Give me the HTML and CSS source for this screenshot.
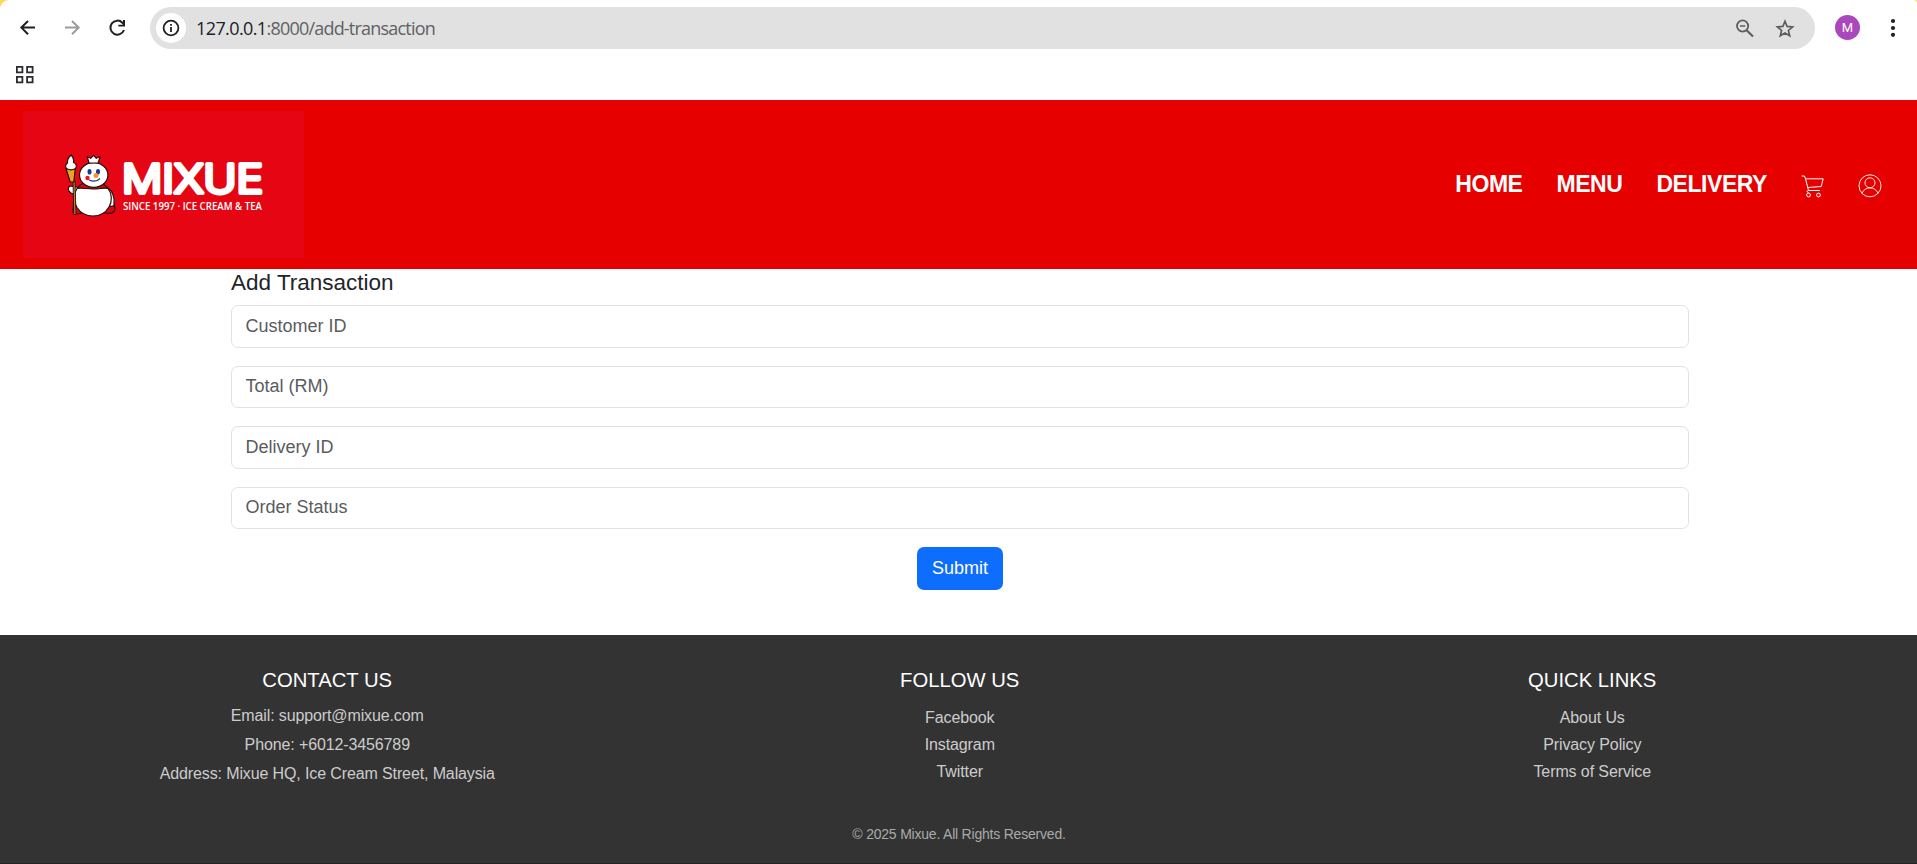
FILE: index.html
```html
<!DOCTYPE html>
<html lang="en">
<head>
<meta charset="utf-8">
<title>Add Transaction</title>
<link rel="stylesheet" href="styles.css">
</head>
<body>
<div class="browser">
  <div class="toolbar">
    <svg class="nav-icons" width="150" height="54" viewBox="0 0 150 54" fill="none" stroke-width="2">
      <path d="M35 27.600H21.500M28 21l-6.600 6.600 6.600 6.600" stroke="#1f2023"/>
      <path d="M65 27.600h13.500M72 21l6.600 6.600-6.600 6.600" stroke="#9b9b9c"/>
      <path d="M124 30a7 7 0 1 1-1.600-7.300l2 2" stroke="#1f2023"/>
      <path d="M125 20v6.600h-6.600v-1.800h4.600V20z" fill="#1f2023"/>
    </svg>
    <div class="address">
      <span class="info">
        <svg width="30" height="30" viewBox="0 0 30 30"><circle cx="15" cy="15" r="7.400" fill="none" stroke="#202124" stroke-width="1.800"/><path d="M14.100 14h1.800v5h-1.800zM14.100 11h1.800v1.800h-1.800z" fill="#202124"/></svg>
      </span>
      <span class="url"><b>127.0.0.1</b>:8000/add-transaction</span>
      <svg class="tools" width="70" height="42" viewBox="0 0 70 42" fill="none" stroke="#5b5d60">
        <circle cx="14.600" cy="19" r="5.600" stroke-width="1.800"/><path d="M11.900 19h5.400" stroke-width="1.500"/><path d="M18.600 23.200l6.400 6.300" stroke-width="2.100"/>
        <path d="M57 14.300l2.100 5.100 5.500.450-4.200 3.600 1.300 5.350-4.700-2.850-4.700 2.850 1.300-5.350-4.200-3.600 5.500-.450z" stroke-width="1.700"/>
      </svg>
    </div>
    <span class="avatar">M</span>
    <svg class="dots" width="6" height="20" viewBox="0 0 6 20" fill="#202124"><circle cx="3" cy="3" r="2.100"/><circle cx="3" cy="10" r="2.100"/><circle cx="3" cy="16.800" r="2.100"/></svg>
  </div>
  <div class="bookmarks">
    <svg width="18" height="18" viewBox="0 0 18 18" fill="none" stroke="#292b2e" stroke-width="1.800"><path d="M.900.900h5.500v5.500H.900zM11.100.900h5.500v5.500h-5.500zM.900 10.900h5.500v5.500H.900zM11.100 10.900h5.500v5.500h-5.500z"/></svg>
  </div>
</div>

<header class="site-header">
  <div class="logo">
    <svg width="281" height="147" viewBox="23 111 281 147">
      <g stroke="#26100c" stroke-width="1.200" stroke-linejoin="round">
        <path d="M84 183c-5 2-9 7-10 12l-1 17c2 2 5 2 8 1h26c5 1 8-1 8-4l-3-17-10-9z" fill="#d50714"/>
        <path d="M70 186c-3 2-2 5 1 7l6 3 3-8-4-1z" fill="#fff"/>
        <path d="M106 188c6 1 9 9 8 17-1 2-5 2-6-1z" fill="#fff"/>
        <path d="M77 188.500c5-1 9 .500 16 .500s11-1.500 15-.500c4 5 4.500 13 1 18.500-3.500 6-9.500 9-16 9-7 0-12.500-3-16-8.500-3.500-6-3.500-14 0-19z" fill="#fff"/>
        <ellipse cx="93.700" cy="175" rx="14.200" ry="12.400" fill="#fff"/>
        <path d="M89 163l-1.800-6.500 3.500 1.800 2.800-3 2.800 3 3.700-1.800-1.700 6.500z" fill="#fff"/>
        <path d="M73 181h2l1 33.500h-2.200z" fill="#b98731" stroke-width=".900"/>
        <path d="M66 168.500h9.300l-1.500 13.500h-3.600z" fill="#eda224"/>
        <path d="M66.500 168.500c-2-2-.500-4.500 1-5.500-.500-3 1-5.500 3.500-8 2 2 3 4.500 2.500 7.500 3 1 3.500 4 2 6-2.500 1.500-6.500 1.500-9 0z" fill="#fff"/>
      </g>
      <ellipse cx="89.500" cy="171.800" rx="2" ry="2.800" fill="#163795"/><ellipse cx="98" cy="171.800" rx="2" ry="2.800" fill="#163795"/>
      <path d="M89 180q6.500 3 11-1.500" fill="none" stroke="#163795" stroke-width="1.200"/>
      <circle cx="87.500" cy="178" r="2.200" fill="#e71722"/><circle cx="96" cy="175.500" r="2.500" fill="#ee991e"/>
      <text class="brand" x="122" y="193.300" textLength="141" lengthAdjust="spacingAndGlyphs">MIXUE</text>
      <text class="tagline" x="123" y="210" textLength="139" lengthAdjust="spacingAndGlyphs">SINCE 1997 · ICE CREAM &amp; TEA</text>
    </svg>
  </div>
  <nav class="menu">
    <a>HOME</a><a>MENU</a><a>DELIVERY</a>
    <svg class="cart" width="23" height="23" viewBox="0 0 23 23" fill="none" stroke="#fff" stroke-width="1"><path d="M.5 1h3l1 2.800 3 11.700h11.500M4.500 3.800h17.700l-2 7.700-13.500 1M7.500 15.500c-1.800 0-1.800 2 0 2.100"/><circle cx="7.500" cy="20" r="1.900"/><circle cx="17.500" cy="20" r="1.900"/></svg>
    <svg class="user" width="24" height="24" viewBox="0 0 24 24" fill="none" stroke="#fff" stroke-width=".900"><circle cx="12" cy="11.800" r="11"/><circle cx="12" cy="8.800" r="5"/><path d="M4 19.500c1-3.500 4.500-5.700 8-5.700s7 2.200 8 5.700"/></svg>
  </nav>
</header>

<main class="content">
  <h1>Add Transaction</h1>
  <form>
    <input type="text" placeholder="Customer ID">
    <input type="text" placeholder="Total (RM)">
    <input type="text" placeholder="Delivery ID">
    <input type="text" placeholder="Order Status">
    <button type="button">Submit</button>
  </form>
</main>

<footer class="site-footer">
  <div class="columns">
    <section class="contact"><h2>CONTACT US</h2><p>Email: support@mixue.com</p><p>Phone: +6012-3456789</p><p>Address: Mixue HQ, Ice Cream Street, Malaysia</p></section>
    <section><h2>FOLLOW US</h2><ul><li>Facebook</li><li>Instagram</li><li>Twitter</li></ul></section>
    <section><h2>QUICK LINKS</h2><ul><li>About Us</li><li>Privacy Policy</li><li>Terms of Service</li></ul></section>
  </div>
  <p class="copyright">© 2025 Mixue. All Rights Reserved.</p>
</footer>
</body>
</html>
```
FILE: styles.css
```css
* { box-sizing: border-box; }
body {
  margin: 0;
  height: 864px;
  overflow: hidden;
  display: flex;
  flex-direction: column;
  background: #fff;
  font-family: "Liberation Sans", Arial, sans-serif;
  color: #212529;
}
h1, h2, p, ul { margin: 0; padding: 0; font-weight: 400; }
svg { display: block; flex: none; }

.browser {
  height: 100px;
  flex: none;
  background: linear-gradient(#ffda55, #ffda55) top / 100% 10px no-repeat;
}
.toolbar {
  height: 54px;
  display: flex;
  align-items: flex-start;
  background: #fff;
  border-radius: 9px 4px 0 0;
}
.address {
  width: 1665px;
  height: 42px;
  margin-top: 7px;
  padding: 0 17px 0 6px;
  display: flex;
  align-items: center;
  border-radius: 21px;
  background: #e1e1e1;
}
.info { border-radius: 50%; background: #fff; }
.url {
  flex: 1;
  margin-left: 10px;
  font: 18px/24px "Open Sans", "Noto Sans", sans-serif;
  letter-spacing: -0.8px;
  color: #606164;
}
.url b { font-weight: 400; letter-spacing: -0.6px; color: #202124; }
.avatar {
  width: 25px;
  height: 25px;
  margin: 15px 0 0 20px;
  border-radius: 50%;
  background: #aa47bc;
  color: #fff;
  font: 13px/25px Roboto, sans-serif;
  text-align: center;
}
.dots { margin: 18px 0 0 29.5px; }
.bookmarks { height: 46px; padding: 12px 0 0 15.5px; background: #fff; }

.site-header {
  height: 169px;
  flex: none;
  padding: 0 35px 0 23px;
  display: flex;
  align-items: center;
  justify-content: space-between;
  background: #e60000;
}
.logo { background: #e50513; }
.brand {
  font: 300 39px Inter, sans-serif;
  fill: #fff;
  stroke: #fff;
  stroke-width: 4px;
  stroke-linejoin: round;
  stroke-linecap: round;
}
.tagline { font: 600 10.5px "Open Sans", sans-serif; fill: #fff; }
.menu {
  display: flex;
  align-items: center;
  gap: 34px;
  color: #fff;
  font-size: 23px;
  font-weight: 700;
  line-height: 26px;
}
.menu a { padding-bottom: 2px; letter-spacing: -0.45px; }
.cart { margin-top: 3px; }
.user { margin-top: 3px; }

.content {
  width: 1458px;
  height: 366px;
  flex: none;
  margin: 0 0 0 231px;
}
h1 { height: 36px; font-size: 22.5px; line-height: 27px; }
form { display: flex; flex-direction: column; align-items: center; }
input {
  width: 100%;
  height: 42.75px;
  margin-bottom: 17.75px;
  padding: 0 13.5px;
  border: 1px solid #dee2e6;
  border-radius: 7px;
  font: 18px "Liberation Sans", Arial, sans-serif;
}
input::placeholder { color: #595c5f; opacity: 1; }
button {
  width: 86px;
  height: 43px;
  padding: 0 0 1px;
  border: 0;
  border-radius: 7px;
  background: #0d6efd;
  color: #fff;
  font: 18px "Liberation Sans", Arial, sans-serif;
}

.site-footer {
  flex: 1;
  padding: 31px 10px 0 11px;
  background: #333;
  border-bottom: 1px solid #272324;
  text-align: center;
}
.columns { height: 158px; display: grid; grid-template-columns: repeat(3, 632.5px); }
h2 { color: #fff; font-size: 20.25px; line-height: 28px; }
.contact p { color: #ccc; font-size: 16px; line-height: 29px; letter-spacing: -0.12px; }
.contact h2 { margin-bottom: 7px; }
ul {
  margin-top: 10px;
  list-style: none;
  color: #ccc;
  font-size: 16px;
  line-height: 27px;
  letter-spacing: -0.1px;
}
.copyright { color: #aaa; font-size: 14px; line-height: 20px; letter-spacing: -0.21px; }
```
